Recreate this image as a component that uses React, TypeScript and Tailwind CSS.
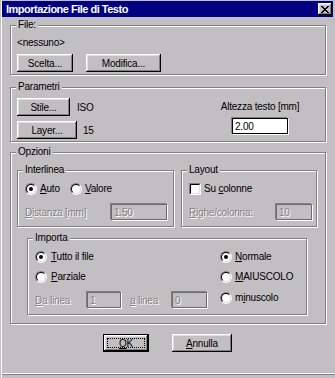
import React from 'react';

const raised =
  'shadow-[inset_-1px_-1px_0_#000,inset_1px_1px_0_#fff,inset_-2px_-2px_0_#808080,inset_2px_2px_0_#dfdfdf]';
const dim = 'text-[#858285] [text-shadow:1px_1px_0_#fff]';

function Btn({ className = '', children }: { className?: string; children: React.ReactNode }) {
  return (
    <div className={`h-[18px] flex items-center justify-center bg-[#c2bfc2] ${raised} ${className}`}>
      {children}
    </div>
  );
}

function Group({ label, className = '', children }: { label: string; className?: string; children?: React.ReactNode }) {
  return (
    <div className={`border border-[#808080] shadow-[inset_1px_1px_0_#fff,1px_1px_0_#fff] ${className}`}>
      <div className="-mt-[7px] ml-[5px] w-fit px-[2px] h-[12px] leading-[12px] bg-[#c2bfc2]">{label}</div>
      {children}
    </div>
  );
}

function Radio({ checked = false }: { checked?: boolean }) {
  return (
    <div className="w-[12px] h-[12px] shrink-0 rounded-full border border-t-[#808080] border-l-[#808080] border-b-white border-r-white">
      <div className="w-[10px] h-[10px] rounded-full border border-t-black border-l-black border-b-[#dfdfdf] border-r-[#dfdfdf] bg-white flex items-center justify-center">
        {checked && <div className="w-[4px] h-[4px] rounded-full bg-black" />}
      </div>
    </div>
  );
}

function Field({ className = '', value, disabled = false }: { className?: string; value: string; disabled?: boolean }) {
  return (
    <div
      className={`h-[16px] flex items-center pl-[2px] border ${
        disabled ? 'border-[#6e6b6e] bg-[#c2bfc2] ' + dim : 'border-black bg-white'
      } shadow-[-1px_-1px_0_#808080,1px_1px_0_#fff] ${className}`}
    >
      {value}
    </div>
  );
}

const xPix = [
  'XX....XX',
  '.XX..XX.',
  '..XXXX..',
  '...XX...',
  '..XXXX..',
  '.XX..XX.',
  'XX....XX',
];

function CloseGlyph() {
  return (
    <svg width="8" height="7" viewBox="0 0 8 7">
      {xPix.flatMap((row, y) =>
        row.split('').map((c, x) => (c === 'X' ? <rect key={`${x}-${y}`} x={x} y={y} width="1" height="1" fill="#000" /> : null))
      )}
    </svg>
  );
}

export default function App() {
  return (
    <div className="w-[335px] h-[378px] bg-[#c2bfc2] pl-[1px] pt-[1px] font-['Liberation_Sans',Arial,sans-serif] text-[10px] tracking-[-0.2px] text-black overflow-hidden">
      <div className="border-l border-white h-full flex flex-col">
        {/* title bar */}
        <div className="h-[16px] w-[331px] bg-[#000080] flex items-center justify-between pl-[4px] pr-[1px]">
          <span className="text-white font-bold text-[11px] tracking-[-0.5px] leading-[16px]">Importazione File di Testo</span>
          <div className={`w-[14px] h-[12px] flex items-center justify-center bg-[#c2bfc2] ${raised}`}>
            <CloseGlyph />
          </div>
        </div>

        <div className="pl-[8px]">
          <Group label="File:" className="mt-[8px] w-[316px]">
            <div className="pl-[6px] pt-[6px] h-[18px] leading-[12px]">&lt;nessuno&gt;</div>
            <div className="flex mt-[5px] pl-[6px] pb-[2px]">
              <Btn className="w-[56px]">Scelta...</Btn>
              <Btn className="w-[75px] ml-[13px]">Modifica...</Btn>
            </div>
          </Group>

          <Group label="Parametri" className="mt-[12px] w-[316px]">
            <div className="flex pl-[6px] pb-[2px]">
              <div className="w-[193px] pt-[5px]">
                <div className="flex items-center">
                  <Btn className="w-[53px]">Stile...</Btn>
                  <span className="ml-[7px]">ISO</span>
                </div>
                <div className="flex items-center mt-[5px]">
                  <Btn className="w-[60px]">Layer...</Btn>
                  <span className="ml-[6px]">15</span>
                </div>
              </div>
              <div className="w-[100px] flex flex-col items-center pt-[8px]">
                <span className="leading-[12px]">Altezza testo [mm]</span>
                <Field className="mt-[5px] w-[56px]" value="2.00" />
              </div>
            </div>
          </Group>

          <Group label="Opzioni" className="mt-[10px] w-[316px]">
            <div className="pl-[6px] pt-[12px] pb-[8px]">
              <div className="flex">
                <Group label="Interlinea" className="w-[157px]">
                  <div className="mt-[7px] pl-[7px] h-[12px] flex items-center">
                    <div className="w-[45px] flex items-center">
                      <Radio checked />
                      <span className="ml-[3px] leading-[12px]">
                        <u className="underline-offset-[1px]">A</u>uto
                      </span>
                    </div>
                    <div className="flex items-center">
                      <Radio />
                      <span className="ml-[3px] leading-[12px]">
                        <u className="underline-offset-[1px]">V</u>alore
                      </span>
                    </div>
                  </div>
                  <div className="mt-[9px] pl-[7px] pr-[6px] pb-[6px] flex items-center justify-between">
                    <span className={dim}>
                      <u className="underline-offset-[1px]">D</u>istanza [mm]
                    </span>
                    <Field className="w-[56px]" value="1.50" disabled />
                  </div>
                </Group>
                <Group label="Layout" className="w-[136px] ml-[7px]">
                  <div className="mt-[7px] pl-[7px] h-[12px] flex items-center">
                    <div className="w-[12px] h-[12px] border border-t-[#808080] border-l-[#808080] border-b-white border-r-white">
                      <div className="w-[10px] h-[10px] border border-t-black border-l-black border-b-[#dfdfdf] border-r-[#dfdfdf] bg-white" />
                    </div>
                    <span className="ml-[3px] leading-[12px]">
                      Su <u className="underline-offset-[1px]">c</u>olonne
                    </span>
                  </div>
                  <div className="mt-[9px] pl-[7px] pr-[4px] pb-[6px] flex items-center justify-between">
                    <span className={dim}>
                      <u className="underline-offset-[1px]">R</u>ighe/colonna:
                    </span>
                    <Field className="w-[36px]" value="10" disabled />
                  </div>
                </Group>
              </div>

              <Group label="Importa" className="mt-[11px] ml-[10px] w-[280px]">
                <div className="flex pl-[7px] pb-[6px]">
                  <div className="w-[185px]">
                    <div className="mt-[7px] h-[12px] flex items-center">
                      <Radio checked />
                      <span className="ml-[4px] leading-[12px]">
                        <u className="underline-offset-[1px]">T</u>utto il file
                      </span>
                    </div>
                    <div className="mt-[8px] h-[12px] flex items-center">
                      <Radio />
                      <span className="ml-[4px] leading-[12px]">
                        <u className="underline-offset-[1px]">P</u>arziale
                      </span>
                    </div>
                    <div className="mt-[9px] flex items-center">
                      <span className={`w-[52px] ${dim}`}>
                        <u className="underline-offset-[1px]">D</u>a linea
                      </span>
                      <Field className="w-[34px]" value="1" disabled />
                      <span className={`w-[42px] ml-[9px] ${dim}`}>
                        <u className="underline-offset-[1px]">a</u> linea
                      </span>
                      <Field className="w-[35px]" value="0" disabled />
                    </div>
                  </div>
                  <div>
                    <div className="mt-[7px] h-[12px] flex items-center">
                      <Radio checked />
                      <span className="ml-[3px] leading-[12px]">
                        <u className="underline-offset-[1px]">N</u>ormale
                      </span>
                    </div>
                    <div className="mt-[8px] h-[12px] flex items-center">
                      <Radio />
                      <span className="ml-[3px] leading-[12px]">
                        <u className="underline-offset-[1px]">M</u>AIUSCOLO
                      </span>
                    </div>
                    <div className="mt-[9px] h-[12px] flex items-center">
                      <Radio />
                      <span className="ml-[3px] leading-[12px]">
                        m<u className="underline-offset-[1px]">i</u>nuscolo
                      </span>
                    </div>
                  </div>
                </div>
              </Group>
            </div>
          </Group>

          <div className="flex mt-[10px]">
            <div className={`ml-[93px] w-[46px] h-[18px] p-[3px] flex border border-black bg-[#c2bfc2] ${raised}`}>
              <div className="flex-1 border border-dotted border-black flex items-center justify-center">
                <span>
                  <u className="underline-offset-[1px]">O</u>K
                </span>
              </div>
            </div>
            <Btn className="w-[60px] ml-[23px]">
              <span>
                <u className="underline-offset-[1px]">A</u>nnulla
              </span>
            </Btn>
          </div>
        </div>

        <div className="mt-[21px] h-[1px] bg-white" />
        <div className="h-[1px] bg-[#808080]" />
      </div>
    </div>
  );
}
